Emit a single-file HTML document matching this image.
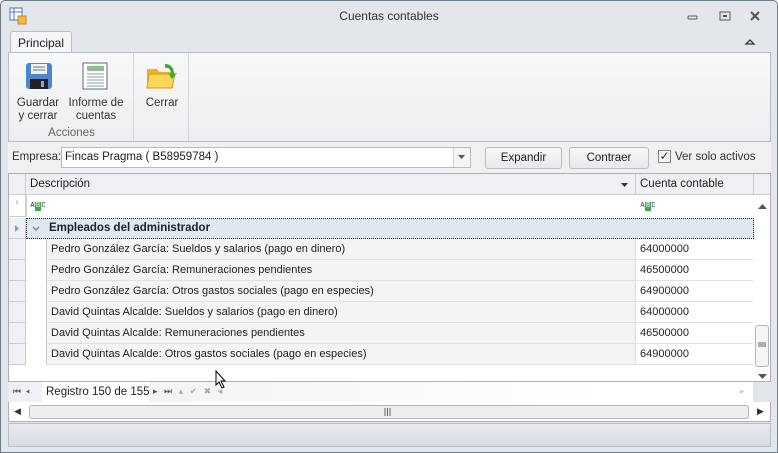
<!DOCTYPE html>
<html><head><meta charset="utf-8"><style>
*{box-sizing:border-box;margin:0;padding:0}
body{width:778px;height:453px;overflow:hidden;background:#fff;font-family:"Liberation Sans",sans-serif;font-size:11px;color:#222}
.win{position:absolute;left:0;top:0;width:778px;height:453px;background:#e3e6ea;border:1px solid #6f7b88;border-radius:5px 5px 0 0}
.abs{position:absolute}
.title{left:0;top:8px;width:776px;text-align:center;font-size:12px;color:#333}
.tab{left:9px;top:30px;width:62px;height:22px;background:#f4f5f7;border:1px solid #b8bec6;border-bottom:none;border-radius:3px 3px 0 0;text-align:center;line-height:22px;font-size:12px}
.ribbon{left:7px;top:51px;width:763px;height:90px;background:linear-gradient(#f7f8f9,#eceef1);border:1px solid #b8bec6}
.lbl{text-align:center;font-size:11.5px;color:#333;line-height:13px}
.rowbar{left:7px;top:141px;width:763px;height:31px;background:#eff0f2}
.combo{left:60px;top:146px;width:410px;height:21px;background:#fff;border:1px solid #b5bcc4;padding-left:3px;line-height:19px;font-size:11.5px}
.btn{height:22px;top:146px;border:1px solid #b8bec6;border-radius:3px;background:linear-gradient(#f6f7f8,#e7e9ec);text-align:center;line-height:20px;font-size:11.5px}
.grid{left:7px;top:172px;width:763px;height:209px;background:#fff;border:1px solid #a9b0b8}
.hdr{top:0;height:21px;background:#eef0f3;border-bottom:1px solid #c9cdd2;border-right:1px solid #c9cdd2;line-height:20px;padding-left:4px;font-size:11.5px}
.row{left:38px;height:21px;width:706px;border-bottom:1px solid #dfe1e4}
.row .d{position:absolute;left:0;width:589px;height:20px;background:#f4f4f4;border-right:1px solid #dfe1e4;padding-left:4px;line-height:20px;font-size:11px}
.row .c{position:absolute;left:593px;line-height:20px;font-size:11px}
.ind{left:0;width:17px;height:21px;border-bottom:1px solid #c9cdd2;border-right:1px solid #c9cdd2;background:#eef0f3}
.abc{display:flex;height:9px;font-size:7px;line-height:9px;font-family:"Liberation Mono",monospace;color:#333}
.abc span{display:block;width:5px;text-align:center}
.abc .g{background:#3aa84a;color:#fff;width:6px}
</style></head><body>
<div class="win">
<svg class="abs" style="left:8px;top:6px" width="18" height="18"><rect x="1" y="1" width="12" height="12" fill="#fff" stroke="#4a7ab8"/><line x1="1" y1="5" x2="13" y2="5" stroke="#4a7ab8"/><line x1="5" y1="1" x2="5" y2="13" stroke="#4a7ab8"/><rect x="9" y="9" width="8" height="8" fill="#f3b845" stroke="#c88a20"/></svg>
<div class="abs title">Cuentas contables</div>
<svg class="abs" style="left:684px;top:8px" width="80" height="14"><rect x="3" y="7" width="9" height="3" rx="1" fill="none" stroke="#555"/><rect x="35" y="3" width="10" height="8" fill="none" stroke="#555"/><rect x="38" y="6" width="4" height="2" fill="#555"/><path d="M66 3l8 8M74 3l-8 8" stroke="#555" stroke-width="2"/></svg>
<svg class="abs" style="left:743px;top:36px" width="12" height="10"><path d="M2 7l4-4 4 4z" fill="none" stroke="#333" stroke-width="1.3"/></svg>
<div class="abs tab">Principal</div>
<div class="abs ribbon">
 <svg class="abs" style="left:16px;top:9px" width="28" height="28"><rect x="1" y="1" width="26" height="26" rx="3" fill="#4f86c9"/><rect x="6" y="2" width="16" height="10" fill="#eef2f7"/><line x1="8" y1="5" x2="20" y2="5" stroke="#777"/><line x1="8" y1="8" x2="20" y2="8" stroke="#777"/><rect x="5" y="17" width="18" height="10" fill="#222"/><rect x="16" y="19" width="3" height="6" fill="#7aa9dd"/></svg>
 <svg class="abs" style="left:72px;top:9px" width="28" height="28"><rect x="2" y="1" width="24" height="26" fill="#fff" stroke="#667"/><rect x="6" y="4" width="17" height="5" fill="#8cbf8c"/><g stroke="#8898aa"><line x1="6" y1="12" x2="23" y2="12"/><line x1="6" y1="15" x2="23" y2="15"/><line x1="6" y1="18" x2="23" y2="18"/><line x1="6" y1="21" x2="23" y2="21"/><line x1="6" y1="24" x2="23" y2="24"/></g></svg>
 <div class="abs lbl" style="left:3px;top:44px;width:52px">Guardar<br>y cerrar</div>
 <div class="abs lbl" style="left:56px;top:44px;width:62px">Informe de<br>cuentas</div>
 <div class="abs lbl" style="left:10px;top:74px;width:105px;color:#666">Acciones</div>
 <div class="abs" style="left:124px;top:0;width:1px;height:88px;background:#d3d7dc"></div>
 <svg class="abs" style="left:136px;top:7px" width="34" height="30"><path d="M2 9h10l2 3h14v16H2z" fill="#f0b020"/><path d="M4 14h26l-3 14H2z" fill="#fcd65a" stroke="#d49a10"/><path d="M20 4c6 0 9 4 9 10l3-1-5 6-4-6 3 1c0-4-2-7-6-6z" fill="#3aa83a"/></svg>
 <div class="abs lbl" style="left:130px;top:44px;width:46px">Cerrar</div>
 <div class="abs" style="left:179px;top:0;width:1px;height:88px;background:#d3d7dc"></div>
</div>
<div class="abs rowbar"></div>
<div class="abs" style="left:11px;top:150px;font-size:11.5px;color:#333">Empresa:</div>
<div class="abs combo">Fincas Pragma ( B58959784 )</div>
<div class="abs" style="left:452px;top:147px;width:17px;height:19px;border-left:1px solid #d0d4d9;background:#f4f5f6"></div>
<svg class="abs" style="left:457px;top:154px" width="8" height="5"><path d="M0 0h7l-3.5 4z" fill="#555"/></svg>
<div class="abs btn" style="left:484px;width:77px">Expandir</div>
<div class="abs btn" style="left:568px;width:80px">Contraer</div>
<div class="abs" style="left:657px;top:149px;width:13px;height:13px;border:1px solid #888;background:#f4f4f4;font-size:12px;line-height:11px;text-align:center;color:#333">✓</div>
<div class="abs" style="left:674px;top:150px;font-size:11.5px;color:#333">Ver solo activos</div>
<div class="abs grid">
 <div class="abs hdr" style="left:0;width:17px;padding:0"></div>
 <div class="abs hdr" style="left:17px;width:610px">Descripción</div>
 <svg class="abs" style="left:612px;top:9px" width="8" height="5"><path d="M0 0h7l-3.5 4z" fill="#333"/></svg>
 <div class="abs hdr" style="left:627px;width:118px">Cuenta contable</div>
 <div class="abs hdr" style="left:745px;width:16px;border-right:none"></div>
 <div class="abs ind" style="top:21px;height:22px;background:#fff"><span style="position:absolute;left:5px;top:3px;font-size:8px;color:#888">♀</span></div>
 <div class="abs abc" style="left:21px;top:28px"><span>A</span><span class="g">B</span><span>C</span></div>
 <div class="abs abc" style="left:631px;top:28px"><span>A</span><span class="g">B</span><span>C</span></div>
 <div class="abs" style="left:17px;top:21px;width:1px;height:22px;background:#c9cdd2"></div>
 <div class="abs ind" style="top:44px"><svg class="abs" style="left:6px;top:7px" width="5" height="7"><path d="M0 0l4 3.5L0 7z" fill="#999"/></svg></div>
 <div class="abs" style="left:17px;top:44px;width:728px;height:21px;background:#dfe8f2;border:1px dotted #222"></div>
 <svg class="abs" style="left:23px;top:52px" width="8" height="6"><path d="M1 1l3 3 3-3" fill="none" stroke="#888" stroke-width="1.5"/></svg>
 <div class="abs" style="left:40px;top:48px;font-weight:bold;font-size:11.5px">Empleados del administrador</div>
 <div class="abs ind" style="top:65px;height:21px"></div><div class="abs ind" style="top:86px"></div><div class="abs ind" style="top:107px"></div><div class="abs ind" style="top:128px"></div><div class="abs ind" style="top:149px"></div><div class="abs ind" style="top:170px"></div>
 <div class="abs" style="left:17px;top:65px;width:21px;height:126px;border-right:1px solid #c9cdd2"></div>
 <div class="abs row" style="top:65px"><div class="d">Pedro González García: Sueldos y salarios (pago en dinero)</div><div class="c">64000000</div></div>
 <div class="abs row" style="top:86px"><div class="d">Pedro González García: Remuneraciones pendientes</div><div class="c">46500000</div></div>
 <div class="abs row" style="top:107px"><div class="d">Pedro González García: Otros gastos sociales (pago en especies)</div><div class="c">64900000</div></div>
 <div class="abs row" style="top:128px"><div class="d">David Quintas Alcalde: Sueldos y salarios (pago en dinero)</div><div class="c">64000000</div></div>
 <div class="abs row" style="top:149px"><div class="d">David Quintas Alcalde: Remuneraciones pendientes</div><div class="c">46500000</div></div>
 <div class="abs row" style="top:170px"><div class="d">David Quintas Alcalde: Otros gastos sociales (pago en especies)</div><div class="c">64900000</div></div>
 <svg class="abs" style="left:749px;top:30px" width="10" height="6"><path d="M0 5l4.5-5L9 5z" fill="#555"/></svg>
 <div class="abs" style="left:746px;top:151px;width:14px;height:42px;border:1px solid #b0b6bd;border-radius:3px;background:#f4f5f6"></div>
 <svg class="abs" style="left:749px;top:168px" width="8" height="6"><path d="M0 0h8M0 2h8M0 4h8" stroke="#666"/></svg>
 <svg class="abs" style="left:749px;top:200px" width="10" height="6"><path d="M0 0h9L4.5 5z" fill="#555"/></svg>
</div>
<div class="abs" style="left:8px;top:381px;width:744px;height:20px;background:linear-gradient(90deg,#eef0f3,#fff 80%)"></div>
<div class="abs" style="left:41px;top:381px;width:107px;height:20px;background:#fff"></div>
<div class="abs" style="left:12px;top:385px;font-size:9px;color:#555;letter-spacing:1px">⏮ ◂</div>
<div class="abs" style="left:45px;top:385px;font-size:11.5px">Registro 150 de 155</div>
<div class="abs" style="left:152px;top:385px;font-size:9px;color:#555;letter-spacing:2px">▸ ⏭ <span style="color:#aaa">▴ ✔ ✖ ◂</span></div>
<div class="abs" style="left:739px;top:385px;font-size:9px;color:#ccc">▸</div>
<div class="abs" style="left:7px;top:401px;width:763px;height:20px;background:#fff;border:1px solid #a9b0b8;border-top:none"></div>
<div class="abs" style="left:28px;top:404px;width:720px;height:14px;background:#eceef0;border:1px solid #b0b6bd;border-radius:3px"></div>
<svg class="abs" style="left:383px;top:407px" width="8" height="8"><path d="M1 0v8M3.5 0v8M6 0v8" stroke="#666"/></svg>
<div class="abs" style="left:13px;top:405px;font-size:9px;color:#333">◀</div>
<div class="abs" style="left:756px;top:405px;font-size:9px;color:#333">▶</div>
<div class="abs" style="left:7px;top:422px;width:763px;height:24px;background:linear-gradient(#e9ebee,#d8dce0);border:1px solid #b8bec6"></div>
<svg class="abs" style="left:214px;top:369px" width="14" height="20"><path d="M1 1v14l3-3 3 6 2-1-3-6h4z" fill="#fff" stroke="#000"/></svg>
</div>
</body></html>
